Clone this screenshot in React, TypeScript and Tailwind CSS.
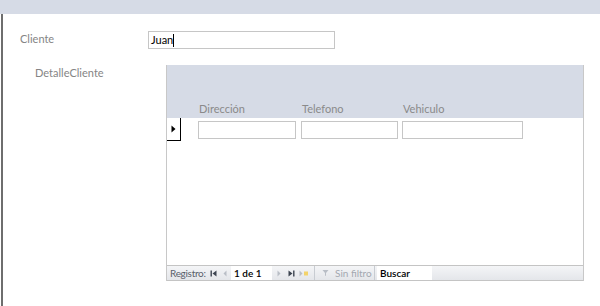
function NavIcon({ kind, faded }: { kind: 'first' | 'prev' | 'next' | 'last' | 'new'; faded?: boolean }) {
  const c = faded ? '#b9bec6' : '#3c4450';
  return (
    <svg width={kind === 'new' ? 10 : 7} height="7" viewBox={kind === 'new' ? '0 0 10 7' : '0 0 7 7'} className="shrink-0">
      {kind === 'first' && (
        <>
          <rect x="0.5" y="0.5" width="1.4" height="6" fill={c} />
          <path d="M6.5 0.5 L2.5 3.5 L6.5 6.5 Z" fill={c} />
        </>
      )}
      {kind === 'prev' && <path d="M4.5 0.5 L1.5 3.5 L4.5 6.5 Z" fill={c} />}
      {kind === 'next' && <path d="M1.5 0.5 L4.5 3.5 L1.5 6.5 Z" fill={c} />}
      {kind === 'last' && (
        <>
          <path d="M0.5 0.5 L4.5 3.5 L0.5 6.5 Z" fill={c} />
          <rect x="5.1" y="0.5" width="1.4" height="6" fill={c} />
        </>
      )}
      {kind === 'new' && (
        <>
          <path d="M0.5 0.5 L3.5 3.5 L0.5 6.5 Z" fill={c} />
          <rect x="5" y="1.5" width="4" height="4" fill="#f3d36b" />
        </>
      )}
    </svg>
  );
}

export default function App() {
  return (
    <div className="w-[600px] h-[306px] bg-white flex flex-col overflow-hidden font-['Lato','Liberation_Sans',sans-serif] text-[11px]">
      <div className="h-[14px] shrink-0 bg-[#d6dbe6]" />
      <div className="flex-1 ml-[1px] border-l-2 border-[#6e6e6e] flex flex-col">
        {/* Cliente */}
        <div className="flex items-center mt-[17px] h-[18px]">
          <span className="w-[145px] pl-[17px] -mt-[2px] text-[#858585]">Cliente</span>
          <div className="w-[187px] h-[18px] border border-[#c6c6c6] flex items-center pl-[2px] text-black">
            Juan<span className="w-px h-[13px] bg-black" />
          </div>
        </div>

        {/* DetalleCliente */}
        <div className="flex mt-[16px]">
          <span className="w-[163px] pl-[32px] text-[#858585]">DetalleCliente</span>
          <div className="w-[418px] h-[216px] border-x border-[#c8c8c8] flex flex-col">
            <div className="h-[53px] bg-[#d6dbe6] flex items-end pb-[1px] pl-[32px] text-[#8a8a8a]">
              <span className="w-[103px]">Dirección</span>
              <span className="w-[101px]">Telefono</span>
              <span>Vehiculo</span>
            </div>
            <div className="flex">
              <div className="w-[14px] h-[23px] border-r border-b border-black flex items-center justify-center">
                <svg width="5" height="8" viewBox="0 0 5 8">
                  <path d="M0.5 0.5 L4.5 4 L0.5 7.5 Z" fill="#000" />
                </svg>
              </div>
              <div className="flex mt-[3px] ml-[17px] gap-[5px]">
                <div className="w-[98px] h-[18px] border border-[#c6c6c6]" />
                <div className="w-[97px] h-[18px] border border-[#c6c6c6]" />
                <div className="w-[121px] h-[18px] border border-[#c6c6c6] -ml-px" />
              </div>
            </div>

            {/* navigation bar */}
            <div className="mt-auto h-[16px] border-y border-[#c4c4c4] bg-gradient-to-b from-[#f4f5f7] to-[#e4e6ea] flex items-center text-[10px] whitespace-nowrap">
              <span className="w-[43px] pl-[3px] tracking-[-0.3px] text-[#59606b]">Registro:</span>
              <NavIcon kind="first" />
              <span className="ml-[5px]"><NavIcon kind="prev" faded /></span>
              <div className="ml-[2px] w-[41px] h-[14px] bg-white flex items-center pl-[3px] text-black font-semibold">1 de 1</div>
              <span className="ml-[4px]"><NavIcon kind="next" faded /></span>
              <span className="ml-[5px]"><NavIcon kind="last" /></span>
              <span className="ml-[4px]"><NavIcon kind="new" faded /></span>
              <span className="ml-[5px] w-px h-[14px] bg-[#c8ccd2]" />
              <svg width="7" height="8" viewBox="0 0 7 8" className="ml-[7px]">
                <path d="M0.5 1 L6.5 1 L4 4 L4 7 L3 6.5 L3 4 Z" fill="#b9bec6" />
              </svg>
              <span className="ml-[6px] w-[36px] text-[#a3a8b0]">Sin filtro</span>
              <span className="ml-[3px] w-px h-[14px] bg-[#c8ccd2]" />
              <div className="ml-[2px] w-[55px] h-[14px] bg-white flex items-center pl-[3px] text-black font-semibold">Buscar</div>
            </div>
          </div>
        </div>
      </div>
    </div>
  );
}
